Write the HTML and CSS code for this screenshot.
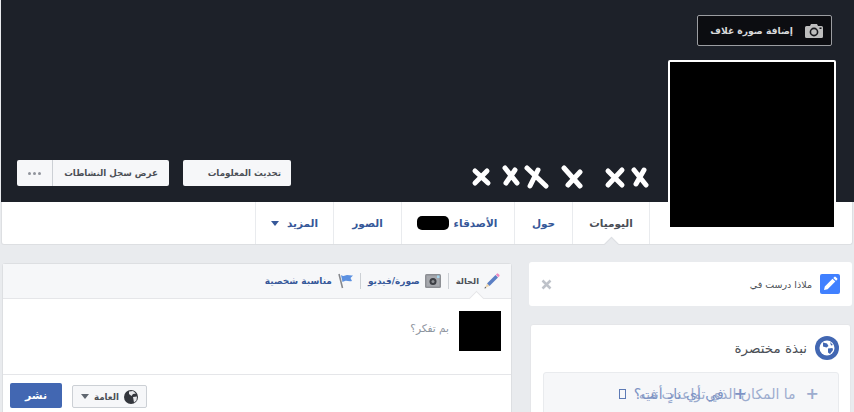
FILE: index.html
```html
<!DOCTYPE html>
<html lang="ar" dir="rtl">
<head>
  <meta charset="UTF-8">
  <title>Profile</title>
  <link rel="stylesheet" href="styles.css">
</head>
<body>
  <div class="header">
    <div class="cover">
      <button class="cover-btn">
        <svg class="cover-cam" viewBox="0 0 18 14"><path fill="#bdbdbd" d="M1.5 2H5l1-2h6l1 2h3.500A1.500 1.500 0 0 1 18 3.500v9a1.500 1.500 0 0 1-1.500 1.500h-15A1.500 1.500 0 0 1 0 12.500v-9A1.500 1.500 0 0 1 1.500 2z"/><circle cx="9" cy="8" r="3.600" fill="none" stroke="#17181c" stroke-width="1.600"/><rect x="14.500" y="3.500" width="2" height="1.500" fill="#17181c"/></svg>
        <span>إضافة صورة غلاف</span>
      </button>
      <div class="cover-actions">
        <button class="btn btn-update">تحديث المعلومات</button>
        <div class="btn-group">
          <button class="btn btn-log">عرض سجل النشاطات</button>
          <button class="btn btn-dots"><i></i><i></i><i></i></button>
        </div>
      </div>
      <svg class="name-marks" viewBox="0 0 180 24">
        <path d="M6 18 18 6M6 6l13 12"/>
        <path d="M36 3l12 15M46 5 37 18"/>
        <path d="M58 3l19 18M69 5 61 21"/>
        <path d="M95 3l16 18M111 7 99 20"/>
        <path d="M139 6l14 14M153 5l-14 15"/>
        <path d="M165 5l12 15M175 5 167 19"/>
      </svg>
    </div>
    <div class="nav">
      <a class="tab tab-timeline active">اليوميات</a>
      <a class="tab tab-about">حول</a>
      <a class="tab tab-friends">الأصدقاء <span class="blob"></span></a>
      <a class="tab tab-photos">الصور</a>
      <a class="tab tab-more">المزيد <span class="caret"></span></a>
    </div>
    <div class="avatar"></div>
  </div>

  <div class="main">
    <div class="side">
      <div class="card prompt">
        <span class="prompt-icon">
          <svg viewBox="0 0 20 20"><path fill="#fff" d="M4 16l.8-3.600 7.700-7.700 2.800 2.800-7.700 7.700zM13.300 3.900l1-1a1 1 0 0 1 1.400 0l1.400 1.400a1 1 0 0 1 0 1.400l-1 1z"/></svg>
        </span>
        <span class="prompt-text">ملاذا درست في</span>
        <svg class="prompt-close" viewBox="0 0 11 11"><path d="M1.500 1.500l8 8M9.500 1.500l-8 8"/></svg>
      </div>
      <div class="card intro">
        <div class="intro-head">
          <svg class="intro-globe" viewBox="0 0 24 24"><circle cx="12" cy="12" r="12" fill="#4267b2"/><circle cx="12" cy="12" r="7.500" fill="#fff"/><path fill="#4267b2" d="M8 6.500l4 1 1.500 2.500-2 1.500-3.500-1zM13 12.500l4.500-.5.500 2-3 4-2-1.500zM15 6l3 3-2 .5z"/></svg>
          <span>نبذة مختصرة</span>
        </div>
        <div class="intro-box">
          <div class="intro-line line-back"><span class="plus">+</span>ما المكان الذي تواعدت فيه</div>
          <div class="intro-line line-front"><span class="plus">+</span>في أي نادٍ أنت؟<span class="tofu"></span></div>
        </div>
      </div>
    </div>

    <div class="composer">
      <div class="composer-tabs">
        <span class="ctab ctab-active">
          <svg class="ctab-icon" viewBox="0 0 16 16"><path fill="#5b7fc4" d="M3 10.500 11.500 2 14 4.500 5.500 13z"/><path fill="#f08ac0" d="M11.800 1.700l1-1a1 1 0 0 1 1.400 0l1.100 1.100a1 1 0 0 1 0 1.400l-1 1z"/><path fill="#edd3a8" d="M3 10.500 5.500 13 1.500 14.500z"/><path fill="#555" d="M.5 15.500l.6-1.900 1.300 1.300z"/></svg>
          <span class="ctab-label">الحالة</span>
        </span>
        <span class="ctab">
          <svg class="ctab-icon" viewBox="0 0 16 16"><rect x="0" y="1" width="16" height="14" rx="1.500" fill="#8d8f94"/><rect x="1.500" y="2.500" width="13" height="11" fill="#a6a8ad"/><circle cx="8" cy="8.500" r="3.500" fill="#3c3e44"/><circle cx="8" cy="8.500" r="1.500" fill="#8d8f94"/><rect x="12" y="2.500" width="2.500" height="2.500" fill="#a5d6ee"/></svg>
          صورة/فيديو
        </span>
        <span class="ctab">
          <svg class="ctab-icon" viewBox="0 0 16 16"><path fill="#5b90e0" d="M4 2c3 2 4 0 6 0 2 .200 4 .800 6 .500L13.500 5 15 8c-3 .700-5-.500-7 0-1.200.300-2 .500-2.500 1z"/><path stroke="#85878c" stroke-width="1.600" d="M2 1l3.500 14"/></svg>
          مناسبة شخصية
        </span>
      </div>
      <div class="composer-body">
        <div class="composer-pic"></div>
        <div class="composer-hint">بم تفكر؟</div>
      </div>
      <div class="composer-foot">
        <button class="privacy">
          <svg class="privacy-globe" viewBox="0 0 14 14"><circle cx="7" cy="7" r="7" fill="#33363c"/><path fill="#e6e7ea" d="M5 1.500l4-.5 3 2.500-3 .5-1.500 2L5 4zM9 7l4-.5-.5 4-2.500 2z"/></svg>
          <span>العامة</span>
          <span class="caret caret-dark"></span>
        </button>
        <button class="publish">نشر</button>
      </div>
    </div>
  </div>
</body>
</html>
```

FILE: styles.css
```css
* {
  box-sizing: border-box;
}

html, body {
  height: 100%;
  overflow: hidden;
}

body {
  margin: 0;
  background: #e9ebee;
  font-family: "DejaVu Sans", sans-serif;
  color: #4b4f56;
}

button {
  font-family: inherit;
  cursor: pointer;
}

/* header */
.header {
  position: relative;
  margin-left: 1px;
}

.cover {
  position: relative;
  height: 202px;
  background: #1d2129;
}

.cover-btn {
  position: absolute;
  top: 15px;
  right: 22px;
  width: 135px;
  height: 31px;
  display: flex;
  align-items: center;
  gap: 12px;
  padding: 0 8px;
  background: #0c0d11;
  border: 1px solid #9b9da1;
  border-radius: 2px;
  color: #d8d9db;
  font-size: 9.2px;
  font-weight: bold;
  white-space: nowrap;
}

.cover-cam {
  width: 18px;
  height: 14px;
  flex: none;
}

.cover-actions {
  position: absolute;
  left: 16px;
  top: 160px;
  display: flex;
  gap: 14px;
}

.btn {
  height: 26px;
  background: #f6f7f9;
  border: 0;
  border-radius: 2px;
  color: #4b4f56;
  font-size: 8.7px;
  font-weight: bold;
  white-space: nowrap;
}

.btn-update {
  width: 108px;
  padding: 0 10px;
  text-align: right;
}

.btn-group {
  display: flex;
}

.btn-log {
  width: 116px;
  padding: 0;
  border-radius: 0 2px 2px 0;
}

.btn-dots {
  width: 36px;
  display: flex;
  align-items: center;
  justify-content: center;
  gap: 2px;
  padding: 0;
  border-right: 1px solid #ccd0d5;
  border-radius: 2px 0 0 2px;
}

.btn-dots i {
  width: 3px;
  height: 3px;
  border-radius: 50%;
  background: #90949c;
}

.name-marks {
  position: absolute;
  left: 468px;
  top: 165px;
  width: 180px;
  height: 24px;
  fill: none;
  stroke: #fff;
  stroke-width: 5;
  stroke-linecap: round;
}

.nav {
  display: flex;
  height: 43px;
  margin: 0 1px 0 0;
  padding-right: 202px;
  background: #fff;
  border: 1px solid #dddfe2;
  border-top: 0;
  border-radius: 0 0 3px 3px;
}

.tab {
  position: relative;
  display: flex;
  align-items: center;
  justify-content: center;
  gap: 5px;
  border-left: 1px solid #e9ebee;
  color: #365899;
  font-size: 10.5px;
  font-weight: bold;
  white-space: nowrap;
}

.tab:first-child {
  border-right: 1px solid #e9ebee;
}

.tab-timeline { width: 78px; }
.tab-about { width: 58px; }
.tab-friends { width: 113px; padding-right: 2px; }
.tab-photos { width: 68px; }
.tab-more { width: 78px; gap: 8px; }

.tab.active {
  color: #4b4f56;
}

.tab.active::after {
  content: "";
  position: absolute;
  bottom: -1px;
  left: 50%;
  width: 10px;
  height: 10px;
  margin-left: -5px;
  transform: translateY(5px) rotate(45deg);
  background: #e9ebee;
  border: 1px solid #dddfe2;
  border-width: 1px 0 0 1px;
}

.blob {
  width: 32px;
  height: 14px;
  background: #000;
  border-radius: 5px;
}

.caret {
  width: 0;
  height: 0;
  border: 4px solid transparent;
  border-top: 5px solid #365899;
  border-bottom: 0;
}

.avatar {
  position: absolute;
  top: 60px;
  right: 18px;
  width: 168px;
  height: 169px;
  background: #000;
  border: 2px solid #fff;
  border-radius: 2px;
}

/* columns */
.main {
  display: flex;
  align-items: flex-start;
  gap: 17px;
  padding: 17px 2px 0 2px;
}

.side {
  width: 323px;
  flex: none;
}

.card {
  background: #fff;
  border-radius: 3px;
}

.prompt {
  display: flex;
  align-items: center;
  height: 44px;
  padding: 0 12px 0 12px;
}

.prompt-icon {
  width: 20px;
  height: 20px;
  background: #4080ff;
  border-radius: 2px;
  flex: none;
}

.prompt-icon svg {
  display: block;
}

.prompt-text {
  margin-right: 8px;
  font-size: 9.5px;
  white-space: nowrap;
}

.prompt-close {
  width: 11px;
  height: 11px;
  margin-right: auto;
  fill: none;
  stroke: #bec2c9;
  stroke-width: 2.500;
}

.intro {
  margin: 18px 1px 0;
  padding: 11px 11px 40px 12px;
  border: 1px solid #e5e6e9;
}

.intro-head {
  display: flex;
  align-items: center;
  gap: 8px;
  font-size: 13.5px;
}

.intro-globe {
  width: 24px;
  height: 24px;
  flex: none;
}

.intro-box {
  display: grid;
  margin-top: 12px;
  padding: 11px 19px 40px;
  background: #f6f7f9;
  border: 1px solid #e9ebee;
  border-radius: 3px;
}

.intro-line {
  grid-area: 1 / 1;
  display: flex;
  align-items: center;
  font-size: 14px;
  white-space: nowrap;
}

.line-back {
  color: #9cacce;
}

.line-front {
  margin-right: 72px;
  color: #7d93c4;
}

.plus {
  font-size: 16px;
  font-weight: bold;
  margin-left: 10px;
}

.tofu {
  display: inline-block;
  width: 7px;
  height: 10px;
  margin-right: 8px;
  border: 1px solid #5d7ab5;
}

/* composer */
.composer {
  width: 510px;
  flex: none;
  margin-top: 1px;
  background: #fff;
  border: 1px solid #dddfe2;
  border-radius: 3px;
}

.composer-tabs {
  display: flex;
  align-items: center;
  height: 35px;
  padding: 0 11px;
  background: #f6f7f9;
  border-bottom: 1px solid #e5e6e9;
}

.ctab {
  position: relative;
  display: flex;
  align-items: center;
  gap: 5px;
  padding-left: 7px;
  margin-left: 7px;
  border-left: 1px solid #ccd0d5;
  color: #365899;
  font-size: 9px;
  font-weight: bold;
  white-space: nowrap;
}

.ctab:last-child {
  border-left: 0;
}

.ctab-active {
  color: #4b4f56;
}

.ctab-label {
  font-size: 8.3px;
}

.ctab-active::after {
  content: "";
  position: absolute;
  right: 18px;
  bottom: -15px;
  width: 10px;
  height: 10px;
  transform: rotate(45deg);
  background: #fff;
  border: 1px solid #e5e6e9;
  border-width: 1px 0 0 1px;
}

.ctab-icon {
  width: 16px;
  height: 16px;
  flex: none;
}

.composer-body {
  display: flex;
  height: 76px;
  padding: 12px 10px 0;
  border-bottom: 1px solid #e5e6e9;
}

.composer-pic {
  width: 42px;
  height: 40px;
  background: #000;
  flex: none;
}

.composer-hint {
  margin: 11px 10px 0 0;
  color: #8d949e;
  font-size: 10.5px;
}

.composer-foot {
  display: flex;
  align-items: flex-start;
  gap: 10px;
  height: 40px;
  padding: 8px 9px 0 7px;
}

.privacy {
  display: flex;
  align-items: center;
  gap: 5px;
  width: 75px;
  height: 23px;
  margin-top: 2px;
  margin-right: auto;
  padding: 0 8px;
  background: #f6f7f9;
  border: 1px solid #ccd0d5;
  border-radius: 2px;
  color: #4b4f56;
  font-size: 8.7px;
  font-weight: bold;
}

.privacy-globe {
  width: 14px;
  height: 14px;
  flex: none;
}

.caret-dark {
  border-top-color: #606770;
}

.publish {
  width: 52px;
  height: 25px;
  padding: 0;
  background: #4267b2;
  border: 0;
  border-radius: 2px;
  color: #fff;
  font-size: 11px;
  font-weight: bold;
}
```
